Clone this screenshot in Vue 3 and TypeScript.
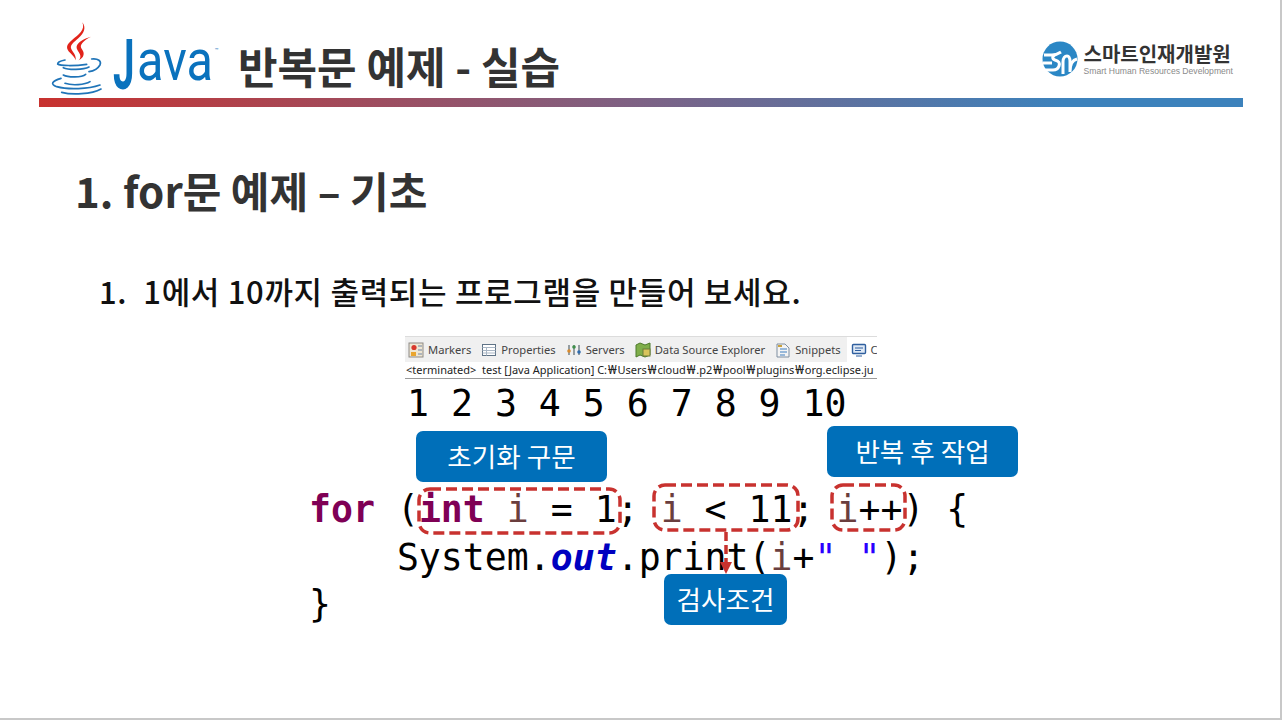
<script setup lang="ts">
const tabs = [
  { label: 'Markers', icon: 'm' },
  { label: 'Properties', icon: 'p' },
  { label: 'Servers', icon: 's' },
  { label: 'Data Source Explorer', icon: 'd' },
  { label: 'Snippets', icon: 'n' },
  { label: 'C', icon: 'c' },
]
const pathDirs = ['Users', 'cloud', '.p2', 'pool', 'plugins', 'org.eclipse.ju']
</script>

<template>
  <div class="slide">
    <header class="head">
      <svg class="cup" viewBox="0 0 180 225" width="60" height="75">
        <g transform="translate(27 0)">
          <path d="M67 4C77 27 55 42 37 56 17 72 17 82 31 96c8 8 14 14 16 22 2-14-6-22-12-32-8-12 6-22 20-34C73 36 79 20 67 4z" fill="#e2231a"/>
          <path d="M93 47C75 52 53 62 50 76c-2 10 9 18 11 28 1 6-2 12-6 14 12-4 20-16 14-28-6-10-10-14-2-24 6-8 16-14 26-19z" fill="#e2231a"/>
          <g fill="none" stroke="#1f74b8" stroke-width="5" stroke-linecap="round">
            <path d="M15 117C0 120-8 124-7 129c7 6 52 6 87 1"/>
            <path d="M95 114c20-2 30 6 25 18-7 12-20 18-33 20"/>
            <path d="M10 140c15 7 60 7 77-2"/>
            <path d="M10 162c15 8 55 8 67-2"/>
            <path d="M3 172c-28 8-33 18-13 25 35 10 95 7 130-5"/>
            <path d="M15 187c20 7 60 5 75-5"/>
            <path d="M5 214c30 8 90 6 118-10"/>
          </g>
        </g>
      </svg>
      <span class="java"><span class="java-j">J</span><span class="java-ava">ava</span><sup>™</sup></span>
      <h1 class="title">반복문 예제 - 실습</h1>
      <div class="brand">
        <svg class="brand-mark" viewBox="0 0 36 36" width="36" height="36">
          <circle cx="18" cy="18" r="17.5" fill="#2b87c5"/>
          <path d="M2 14h8c3 0 6-1 9-3" fill="none" stroke="#fff" stroke-width="3"/>
          <path d="M13 14c-3 1-3 4 0 5 4 1 5 3 4 6-1 3-3 4-6 4H3" fill="none" stroke="#fff" stroke-width="3"/>
          <path d="M1 22h9" fill="none" stroke="#fff" stroke-width="3"/>
          <path d="M21 33V21c0-4 2-6 4-6s3 2 3 6v10c0-8 2-12 7-13" fill="none" stroke="#fff" stroke-width="3"/>
        </svg>
        <div class="brand-text">
          <strong>스마트인재개발원</strong>
          <small>Smart Human Resources Development</small>
        </div>
      </div>
    </header>
    <div class="rule"></div>

    <h2 class="section">1. for문 예제 – 기초</h2>
    <p class="task"><span>1.</span><span>1에서 10까지 출력되는 프로그램을 만들어 보세요.</span></p>

    <section class="figure">
      <div class="console">
        <div class="tabs">
          <span v-for="t in tabs" :key="t.label" class="tab" :class="{ active: t.icon === 'c' }">
            <svg class="ico" viewBox="0 0 16 16" width="16" height="16">
              <template v-if="t.icon === 'm'">
                <rect x="1" y="1" width="14" height="14" fill="#efe6d2" stroke="#8d8a86"/>
                <circle cx="6" cy="5.5" r="2.6" fill="#d8382c"/>
                <rect x="3" y="10" width="5" height="4" fill="#eaa52e"/>
                <path d="M10 4h4M10 8h4M10 12h4" stroke="#6f86a8"/>
              </template>
              <template v-else-if="t.icon === 'p'">
                <rect x="1.5" y="2.5" width="13" height="11" fill="#fff" stroke="#5f7386"/>
                <path d="M1.5 5.5h13M1.5 8.5h13M1.5 11h13M5.5 5.5v8" stroke="#a9b6c4"/>
              </template>
              <template v-else-if="t.icon === 's'">
                <path d="M3 3v10M8 3v10M13 3v10" stroke="#6e7a80" stroke-width="1.4"/>
                <circle cx="3" cy="9" r="1.8" fill="#d98a2c"/>
                <circle cx="8" cy="5" r="1.8" fill="#3f8f4a"/>
                <circle cx="13" cy="10" r="1.8" fill="#2f6cae"/>
              </template>
              <template v-else-if="t.icon === 'd'">
                <path d="M1 3l4-2 5 2 5-2v12l-5 2-5-2-4 2z" fill="#7fae4a" stroke="#4d7a2c"/>
                <rect x="8" y="7" width="7" height="7" fill="#d8c45c" stroke="#6b7b3a"/>
              </template>
              <template v-else-if="t.icon === 'n'">
                <path d="M2 2h8l4 4v9H2z" fill="#f4f4f4" stroke="#7f8ea0"/>
                <path d="M5 7h7M5 10h7M5 13h5" stroke="#3f7fbf"/>
                <path d="M3 4h4" stroke="#c9a13c" stroke-width="2"/>
              </template>
              <template v-else>
                <rect x="1.5" y="2.5" width="13" height="9" rx="1" fill="#dfe9f5" stroke="#2f5f9f" stroke-width="1.4"/>
                <path d="M4 6h8M4 8.5h6M5 14h6" stroke="#2f5f9f"/>
              </template>
            </svg>
            {{ t.label }}
          </span>
        </div>
        <div class="path">&lt;terminated&gt;&nbsp; test [Java Application] C:<template v-for="d in pathDirs" :key="d"><span class="won">₩</span>{{ d }}</template></div>
        <div class="output">1 2 3 4 5 6 7 8 9 10</div>
      </div>

      <pre class="code"><span class="kw">for</span> (<span class="kw">int</span> <span class="var">i</span> = 1; <span class="var">i</span> &lt; 11; <span class="var">i</span>++) {
    System.<span class="field">out</span>.print(<span class="var">i</span>+<span class="str">" "</span>);
}</pre>

      <span class="call call-init">초기화 구문</span>
      <span class="call call-after">반복 후 작업</span>
      <span class="call call-test">검사조건</span>
      <svg class="dash dash-init" width="205" height="48"><rect x="2" y="2" width="201" height="44" rx="11" /></svg>
      <svg class="dash dash-test" width="148" height="49"><rect x="2" y="2" width="144" height="45" rx="11" /></svg>
      <svg class="dash dash-after" width="77" height="49"><rect x="2" y="2" width="73" height="45" rx="11" /></svg>
      <svg class="arrow" viewBox="0 0 14 42" width="14" height="42">
        <path d="M7 0V31" stroke="#c8322f" stroke-width="3.5" stroke-dasharray="9 4" fill="none"/>
        <path d="M1 30h12L7 42z" fill="#c8322f"/>
      </svg>
    </section>
  </div>
</template>

<style scoped>
.slide {
  position: relative;
  width: 1282px;
  height: 720px;
  box-sizing: border-box;
  border-right: 2px solid #c8c8c8;
  border-bottom: 2px solid #c8c8c8;
  overflow: hidden;
  background: #fff;
  font-family: "Noto Sans CJK KR", "Noto Sans", sans-serif;
  color: #262626;
  display: flex;
  flex-direction: column;
}
.head {
  display: flex;
  align-items: center;
  height: 98px;
  padding: 18px 47px 0 51px;
  box-sizing: border-box;
}
.cup { flex: none; }
.java {
  flex: none;
  width: 102px;
  margin: 14px 0 0 2px;
  font-family: Roboto, sans-serif;
  color: #0a72bd;
  line-height: 1;
  white-space: nowrap;
}
.java-j {
  display: inline-block;
  width: 24px;
  font-size: 70px;
  font-weight: 700;
  transform: scaleX(0.55);
  transform-origin: left center;
  vertical-align: -9px;
}
.java-ava {
  display: inline-block;
  width: 78px;
  font-size: 58px;
  transform: scaleX(0.84);
  transform-origin: left center;
}
.java sup { font-size: 6px; vertical-align: 28px; }
.title {
  margin: 14px 0 0 23px;
  font-size: 43px;
  font-weight: 700;
  color: #333;
  line-height: 1;
}
.brand {
  margin-left: auto;
  margin-top: 1px;
  display: flex;
  align-items: center;
  gap: 6px;
}
.brand-text { display: flex; flex-direction: column; }
.brand-text strong { font-size: 20px; line-height: 24px; font-weight: 700; color: #333; }
.brand-text small {
  font-family: "Liberation Sans", sans-serif;
  font-size: 8.6px;
  line-height: 10px;
  color: #8a8a8a;
  white-space: nowrap;
}
.rule {
  height: 9px;
  margin: 0 37px 0 39px;
  background: linear-gradient(90deg, #c8322f 0%, #7d6285 50%, #3c82bc 85%, #3c82bc 100%);
}
.section {
  margin: 58px 0 0 75px;
  font-size: 42px;
  line-height: 50px;
  font-weight: 700;
  color: #333;
}
.task {
  margin: 56px 0 0 99px;
  display: flex;
  gap: 16px;
  font-size: 31px;
  letter-spacing: 0.68px;
  line-height: 40px;
  font-weight: 500;
  color: #111;
}
.figure {
  position: relative;
  flex: 1;
  margin-top: 25px;
}
.console {
  position: absolute;
  left: 405px;
  top: 0;
  width: 472px;
  overflow: hidden;
}
.tabs {
  display: flex;
  height: 26px;
  align-items: center;
  padding-left: 3px;
  background: #f0f0f0;
  border-top: 1px solid #dcdcdc;
  box-sizing: border-box;
  white-space: nowrap;
  font-family: "Noto Sans", sans-serif;
  font-size: 11.2px;
  color: #444;
}
.tab { display: inline-flex; align-items: center; gap: 4px; height: 100%; padding-right: 10px; flex: none; }
.tab.active { background: #fff; padding-left: 4px; margin-left: -4px; }
.ico { flex: none; }
.path {
  height: 17px;
  line-height: 15px;
  padding-left: 1px;
  font-family: "Noto Sans", sans-serif;
  font-size: 11px;
  color: #222;
  border-bottom: 1px solid #9a9a9a;
  white-space: nowrap;
  box-sizing: border-box;
}
.won { font-size: 13px; line-height: 0; padding: 0 0.9px; }
.output {
  font-family: "DejaVu Sans Mono", monospace;
  font-size: 36.5px;
  line-height: 50px;
  color: #000;
  padding-left: 2px;
  white-space: pre;
}
.code {
  position: absolute;
  left: 309px;
  top: 150px;
  margin: 0;
  font-family: "DejaVu Sans Mono", monospace;
  font-size: 36.5px;
  line-height: 47.5px;
  color: #000;
}
.kw { color: #7f0055; font-weight: 700; }
.var { color: #6a3e3e; }
.field { color: #0000c0; font-weight: 700; font-style: italic; }
.str { color: #2a00ff; }
.call {
  position: absolute;
  background: #006fb9;
  color: #fff;
  border-radius: 7px;
  display: flex;
  align-items: center;
  justify-content: center;
  font-size: 26.6px;
  line-height: 1;
}
.call-init { left: 416px; top: 95px; width: 191px; height: 51px; }
.call-after { left: 827px; top: 90px; width: 191px; height: 51px; }
.call-test { left: 664px; top: 238px; width: 123px; height: 51px; }
.dash { position: absolute; }
.dash rect {
  fill: none;
  stroke: #c8322f;
  stroke-width: 3.5;
  stroke-dasharray: 11 5;
}
.dash-init { left: 417px; top: 151px; }
.dash-test { left: 652px; top: 147px; }
.dash-after { left: 830px; top: 147px; }
.arrow { position: absolute; left: 719px; top: 196px; }
</style>
